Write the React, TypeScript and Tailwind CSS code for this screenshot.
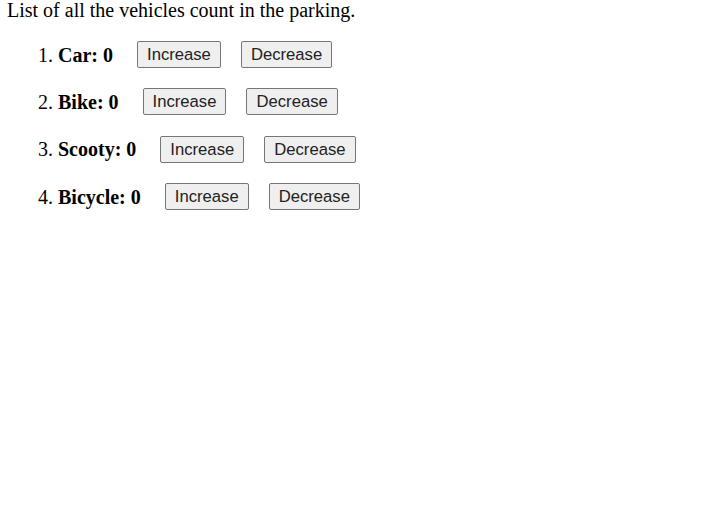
import React, { useState } from "react";

const vehicles = ["Car", "Bike", "Scooty", "Bicycle"];

const App = () => {
  const [counts, setCounts] = useState<number[]>([0, 0, 0, 0]);

  const change = (i: number, d: number) => {
    setCounts(counts.map((c, j) => (j === i ? c + d : c)));
  };

  return (
    <div className="font-['Liberation_Serif',serif] text-[20px] text-black">
      <div className="pl-[7px] leading-[20px]">List of all the vehicles count in the parking.</div>
      <ol className="pl-[38px] pt-[21px]">
        {vehicles.map((v, i) => (
          <li key={v} className="flex items-center h-[27px] mb-[20.4px]">
            <span>
              {i + 1}. <b>{v}: {counts[i]}</b>
            </span>
            <button
              onClick={() => change(i, 1)}
              className="ml-[24px] h-[27px] px-[9px] font-['Liberation_Sans',sans-serif] text-[16.67px] text-[#222] bg-[#efefef] border border-[#767676] rounded-[2px]"
            >
              Increase
            </button>
            <button
              onClick={() => change(i, -1)}
              className="ml-[20px] h-[27px] px-[9px] font-['Liberation_Sans',sans-serif] text-[16.67px] text-[#222] bg-[#efefef] border border-[#767676] rounded-[2px]"
            >
              Decrease
            </button>
          </li>
        ))}
      </ol>
    </div>
  );
};

export default App;
